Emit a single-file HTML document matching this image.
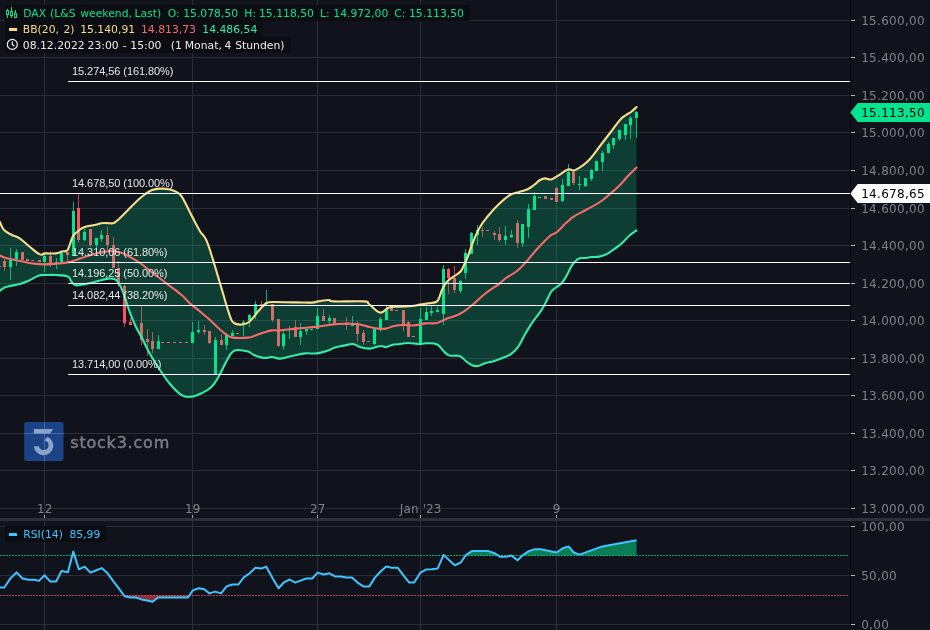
<!DOCTYPE html>
<html lang="de"><head><meta charset="utf-8"><title>DAX Chart</title>
<style>
html,body{margin:0;padding:0;background:#10131b;}
body{width:930px;height:630px;overflow:hidden;}
svg{display:block;}
text{font-family:"DejaVu Sans","Liberation Sans",sans-serif;}
.ax{font-size:12px;fill:#7d808a;}
.lg{font-size:10.8px;}
.fib{font-size:11px;fill:#e6e6e6;font-family:"Liberation Sans",sans-serif;}
</style></head><body>
<svg width="930" height="630" viewBox="0 0 930 630">
<rect width="930" height="630" fill="#10131b"/>
<defs>
<filter id="noLcd" filterUnits="userSpaceOnUse" x="0" y="0" width="930" height="630" color-interpolation-filters="sRGB"><feColorMatrix type="matrix" values="1 0 0 0 0 0 1 0 0 0 0 0 1 0 0 0 0 0 1 0"/></filter>
<clipPath id="main"><rect x="0" y="0" width="850" height="518"/></clipPath>
<clipPath id="up70"><rect x="0" y="520" width="850" height="35.5"/></clipPath>
<clipPath id="dn30"><rect x="0" y="595.3" width="850" height="40"/></clipPath>
</defs>
<g filter="url(#noLcd)">

<g stroke="#2a2e3a" stroke-width="1" shape-rendering="crispEdges">
<line x1="0" y1="508.5" x2="850" y2="508.5"/>
<line x1="0" y1="470.5" x2="850" y2="470.5"/>
<line x1="0" y1="433.5" x2="850" y2="433.5"/>
<line x1="0" y1="395.5" x2="850" y2="395.5"/>
<line x1="0" y1="358.5" x2="850" y2="358.5"/>
<line x1="0" y1="320.5" x2="850" y2="320.5"/>
<line x1="0" y1="283.5" x2="850" y2="283.5"/>
<line x1="0" y1="245.5" x2="850" y2="245.5"/>
<line x1="0" y1="208.5" x2="850" y2="208.5"/>
<line x1="0" y1="170.5" x2="850" y2="170.5"/>
<line x1="0" y1="132.5" x2="850" y2="132.5"/>
<line x1="0" y1="95.5" x2="850" y2="95.5"/>
<line x1="0" y1="57.5" x2="850" y2="57.5"/>
<line x1="0" y1="20.5" x2="850" y2="20.5"/>
<line x1="44.5" y1="0" x2="44.5" y2="630"/>
<line x1="192.5" y1="0" x2="192.5" y2="630"/>
<line x1="317.5" y1="0" x2="317.5" y2="630"/>
<line x1="420.5" y1="0" x2="420.5" y2="630"/>
<line x1="556.5" y1="0" x2="556.5" y2="630"/>
<line x1="0" y1="624.5" x2="850" y2="624.5"/>
<line x1="0" y1="575.5" x2="850" y2="575.5"/>
<line x1="0" y1="526.5" x2="850" y2="526.5"/>
</g>
<g clip-path="url(#main)" shape-rendering="crispEdges">
<rect x="4" y="259" width="1" height="12" fill="#ff5060" fill-opacity="0.75"/><rect x="3" y="261" width="3" height="6" fill="#ff5060"/>
<rect x="10" y="248" width="1" height="32" fill="#03e48f" fill-opacity="0.75"/><rect x="9" y="260" width="3" height="7" fill="#03e48f"/>
<rect x="16" y="249" width="1" height="17" fill="#03e48f" fill-opacity="0.75"/><rect x="15" y="252" width="3" height="7" fill="#03e48f"/>
<rect x="22" y="252" width="1" height="8" fill="#ff5060" fill-opacity="0.75"/><rect x="21" y="252" width="3" height="8" fill="#ff5060"/>
<rect x="27" y="259" width="1" height="2" fill="#ff5060" fill-opacity="0.75"/><rect x="26" y="259" width="3" height="2" fill="#ff5060"/>
<rect x="39" y="260" width="1" height="2" fill="#ff5060" fill-opacity="0.75"/><rect x="38" y="260" width="3" height="2" fill="#ff5060"/>
<rect x="44" y="254" width="1" height="18" fill="#03e48f" fill-opacity="0.75"/><rect x="43" y="256" width="3" height="6" fill="#03e48f"/>
<rect x="50" y="251" width="1" height="16" fill="#ff5060" fill-opacity="0.75"/><rect x="49" y="256" width="3" height="8" fill="#ff5060"/>
<rect x="56" y="258" width="1" height="11" fill="#03e48f" fill-opacity="0.75"/><rect x="55" y="262" width="3" height="1" fill="#03e48f"/>
<rect x="61" y="252" width="1" height="10" fill="#03e48f" fill-opacity="0.75"/><rect x="60" y="253" width="3" height="9" fill="#03e48f"/>
<rect x="67" y="252" width="1" height="11" fill="#ff5060" fill-opacity="0.75"/><rect x="66" y="252" width="3" height="3" fill="#ff5060"/>
<rect x="73" y="202" width="1" height="54" fill="#03e48f" fill-opacity="0.75"/><rect x="72" y="211" width="3" height="45" fill="#03e48f"/>
<rect x="78" y="194" width="1" height="49" fill="#ff5060" fill-opacity="0.75"/><rect x="77" y="208" width="3" height="32" fill="#ff5060"/>
<rect x="84" y="229" width="1" height="12" fill="#03e48f" fill-opacity="0.75"/><rect x="83" y="232" width="3" height="8" fill="#03e48f"/>
<rect x="90" y="229" width="1" height="18" fill="#ff5060" fill-opacity="0.75"/><rect x="89" y="229" width="3" height="16" fill="#ff5060"/>
<rect x="96" y="238" width="1" height="13" fill="#03e48f" fill-opacity="0.75"/><rect x="95" y="238" width="3" height="7" fill="#03e48f"/>
<rect x="101" y="230" width="1" height="12" fill="#03e48f" fill-opacity="0.75"/><rect x="100" y="235" width="3" height="4" fill="#03e48f"/>
<rect x="107" y="227" width="1" height="23" fill="#ff5060" fill-opacity="0.75"/><rect x="106" y="235" width="3" height="10" fill="#ff5060"/>
<rect x="113" y="237" width="1" height="31" fill="#ff5060" fill-opacity="0.75"/><rect x="112" y="245" width="3" height="23" fill="#ff5060"/>
<rect x="118" y="261" width="1" height="26" fill="#ff5060" fill-opacity="0.75"/><rect x="117" y="268" width="3" height="15" fill="#ff5060"/>
<rect x="124" y="284" width="1" height="43" fill="#ff5060" fill-opacity="0.75"/><rect x="123" y="286" width="3" height="37" fill="#ff5060"/>
<rect x="130" y="318" width="1" height="7" fill="#ff5060" fill-opacity="0.75"/><rect x="129" y="322" width="3" height="3" fill="#ff5060"/>
<rect x="141" y="306" width="1" height="39" fill="#ff5060" fill-opacity="0.75"/><rect x="140" y="323" width="3" height="17" fill="#ff5060"/>
<rect x="147" y="329" width="1" height="27" fill="#ff5060" fill-opacity="0.75"/><rect x="146" y="339" width="3" height="3" fill="#ff5060"/>
<rect x="152" y="332" width="1" height="21" fill="#ff5060" fill-opacity="0.75"/><rect x="151" y="341" width="3" height="8" fill="#ff5060"/>
<rect x="158" y="335" width="1" height="14" fill="#03e48f" fill-opacity="0.75"/><rect x="157" y="341" width="3" height="8" fill="#03e48f"/>
<rect x="192" y="322" width="1" height="21" fill="#03e48f" fill-opacity="0.75"/><rect x="191" y="332" width="3" height="11" fill="#03e48f"/>
<rect x="198" y="321" width="1" height="13" fill="#03e48f" fill-opacity="0.75"/><rect x="197" y="330" width="3" height="2" fill="#03e48f"/>
<rect x="204" y="325" width="1" height="10" fill="#ff5060" fill-opacity="0.75"/><rect x="203" y="330" width="3" height="2" fill="#ff5060"/>
<rect x="209" y="331" width="1" height="13" fill="#ff5060" fill-opacity="0.75"/><rect x="208" y="331" width="3" height="12" fill="#ff5060"/>
<rect x="215" y="337" width="1" height="37" fill="#03e48f" fill-opacity="0.75"/><rect x="214" y="340" width="3" height="34" fill="#03e48f"/>
<rect x="221" y="334" width="1" height="11" fill="#ff5060" fill-opacity="0.75"/><rect x="220" y="340" width="3" height="5" fill="#ff5060"/>
<rect x="226" y="335" width="1" height="15" fill="#03e48f" fill-opacity="0.75"/><rect x="225" y="335" width="3" height="10" fill="#03e48f"/>
<rect x="232" y="330" width="1" height="6" fill="#03e48f" fill-opacity="0.75"/><rect x="231" y="333" width="3" height="3" fill="#03e48f"/>
<rect x="243" y="320" width="1" height="16" fill="#03e48f" fill-opacity="0.75"/><rect x="242" y="322" width="3" height="3" fill="#03e48f"/>
<rect x="249" y="314" width="1" height="13" fill="#03e48f" fill-opacity="0.75"/><rect x="248" y="315" width="3" height="5" fill="#03e48f"/>
<rect x="255" y="301" width="1" height="18" fill="#03e48f" fill-opacity="0.75"/><rect x="254" y="304" width="3" height="10" fill="#03e48f"/>
<rect x="261" y="301" width="1" height="5" fill="#ff5060" fill-opacity="0.75"/><rect x="260" y="304" width="3" height="2" fill="#ff5060"/>
<rect x="266" y="290" width="1" height="13" fill="#03e48f" fill-opacity="0.75"/><rect x="265" y="302" width="3" height="1" fill="#03e48f"/>
<rect x="272" y="304" width="1" height="18" fill="#ff5060" fill-opacity="0.75"/><rect x="271" y="304" width="3" height="16" fill="#ff5060"/>
<rect x="278" y="319" width="1" height="28" fill="#ff5060" fill-opacity="0.75"/><rect x="277" y="319" width="3" height="27" fill="#ff5060"/>
<rect x="283" y="331" width="1" height="19" fill="#03e48f" fill-opacity="0.75"/><rect x="282" y="334" width="3" height="12" fill="#03e48f"/>
<rect x="289" y="326" width="1" height="13" fill="#03e48f" fill-opacity="0.75"/><rect x="288" y="329" width="3" height="1" fill="#03e48f"/>
<rect x="295" y="320" width="1" height="17" fill="#ff5060" fill-opacity="0.75"/><rect x="294" y="327" width="3" height="10" fill="#ff5060"/>
<rect x="300" y="323" width="1" height="22" fill="#03e48f" fill-opacity="0.75"/><rect x="299" y="331" width="3" height="6" fill="#03e48f"/>
<rect x="306" y="329" width="1" height="6" fill="#03e48f" fill-opacity="0.75"/><rect x="305" y="329" width="3" height="2" fill="#03e48f"/>
<rect x="317" y="308" width="1" height="21" fill="#03e48f" fill-opacity="0.75"/><rect x="316" y="316" width="3" height="13" fill="#03e48f"/>
<rect x="323" y="309" width="1" height="12" fill="#ff5060" fill-opacity="0.75"/><rect x="322" y="316" width="3" height="5" fill="#ff5060"/>
<rect x="329" y="315" width="1" height="11" fill="#03e48f" fill-opacity="0.75"/><rect x="328" y="318" width="3" height="3" fill="#03e48f"/>
<rect x="334" y="318" width="1" height="6" fill="#ff5060" fill-opacity="0.75"/><rect x="333" y="318" width="3" height="6" fill="#ff5060"/>
<rect x="346" y="317" width="1" height="13" fill="#ff5060" fill-opacity="0.75"/><rect x="345" y="324" width="3" height="1" fill="#ff5060"/>
<rect x="352" y="316" width="1" height="10" fill="#03e48f" fill-opacity="0.75"/><rect x="351" y="325" width="3" height="1" fill="#03e48f"/>
<rect x="357" y="321" width="1" height="21" fill="#ff5060" fill-opacity="0.75"/><rect x="356" y="325" width="3" height="9" fill="#ff5060"/>
<rect x="363" y="330" width="1" height="15" fill="#ff5060" fill-opacity="0.75"/><rect x="362" y="333" width="3" height="9" fill="#ff5060"/>
<rect x="374" y="329" width="1" height="16" fill="#03e48f" fill-opacity="0.75"/><rect x="373" y="329" width="3" height="15" fill="#03e48f"/>
<rect x="380" y="317" width="1" height="15" fill="#03e48f" fill-opacity="0.75"/><rect x="379" y="319" width="3" height="9" fill="#03e48f"/>
<rect x="386" y="306" width="1" height="14" fill="#03e48f" fill-opacity="0.75"/><rect x="385" y="309" width="3" height="11" fill="#03e48f"/>
<rect x="391" y="306" width="1" height="5" fill="#ff5060" fill-opacity="0.75"/><rect x="390" y="308" width="3" height="3" fill="#ff5060"/>
<rect x="403" y="310" width="1" height="21" fill="#ff5060" fill-opacity="0.75"/><rect x="402" y="310" width="3" height="14" fill="#ff5060"/>
<rect x="408" y="321" width="1" height="16" fill="#ff5060" fill-opacity="0.75"/><rect x="407" y="322" width="3" height="15" fill="#ff5060"/>
<rect x="420" y="308" width="1" height="37" fill="#03e48f" fill-opacity="0.75"/><rect x="419" y="319" width="3" height="26" fill="#03e48f"/>
<rect x="426" y="307" width="1" height="13" fill="#03e48f" fill-opacity="0.75"/><rect x="425" y="312" width="3" height="8" fill="#03e48f"/>
<rect x="431" y="306" width="1" height="10" fill="#03e48f" fill-opacity="0.75"/><rect x="430" y="311" width="3" height="2" fill="#03e48f"/>
<rect x="437" y="307" width="1" height="5" fill="#03e48f" fill-opacity="0.75"/><rect x="436" y="310" width="3" height="2" fill="#03e48f"/>
<rect x="443" y="265" width="1" height="60" fill="#03e48f" fill-opacity="0.75"/><rect x="442" y="269" width="3" height="45" fill="#03e48f"/>
<rect x="448" y="268" width="1" height="26" fill="#ff5060" fill-opacity="0.75"/><rect x="447" y="269" width="3" height="9" fill="#ff5060"/>
<rect x="454" y="266" width="1" height="27" fill="#ff5060" fill-opacity="0.75"/><rect x="453" y="278" width="3" height="12" fill="#ff5060"/>
<rect x="460" y="280" width="1" height="13" fill="#03e48f" fill-opacity="0.75"/><rect x="459" y="281" width="3" height="10" fill="#03e48f"/>
<rect x="465" y="249" width="1" height="30" fill="#03e48f" fill-opacity="0.75"/><rect x="464" y="253" width="3" height="20" fill="#03e48f"/>
<rect x="471" y="232" width="1" height="22" fill="#03e48f" fill-opacity="0.75"/><rect x="470" y="233" width="3" height="21" fill="#03e48f"/>
<rect x="477" y="225" width="1" height="20" fill="#03e48f" fill-opacity="0.75"/><rect x="476" y="230" width="3" height="5" fill="#03e48f"/>
<rect x="482" y="227" width="1" height="10" fill="#ff5060" fill-opacity="0.75"/><rect x="481" y="230" width="3" height="1" fill="#ff5060"/>
<rect x="494" y="231" width="1" height="9" fill="#ff5060" fill-opacity="0.75"/><rect x="493" y="233" width="3" height="2" fill="#ff5060"/>
<rect x="499" y="227" width="1" height="15" fill="#ff5060" fill-opacity="0.75"/><rect x="498" y="234" width="3" height="6" fill="#ff5060"/>
<rect x="505" y="226" width="1" height="19" fill="#03e48f" fill-opacity="0.75"/><rect x="504" y="236" width="3" height="4" fill="#03e48f"/>
<rect x="511" y="230" width="1" height="8" fill="#03e48f" fill-opacity="0.75"/><rect x="510" y="235" width="3" height="2" fill="#03e48f"/>
<rect x="517" y="220" width="1" height="28" fill="#ff5060" fill-opacity="0.75"/><rect x="516" y="223" width="3" height="20" fill="#ff5060"/>
<rect x="522" y="224" width="1" height="23" fill="#03e48f" fill-opacity="0.75"/><rect x="521" y="224" width="3" height="19" fill="#03e48f"/>
<rect x="528" y="204" width="1" height="34" fill="#03e48f" fill-opacity="0.75"/><rect x="527" y="209" width="3" height="18" fill="#03e48f"/>
<rect x="534" y="192" width="1" height="18" fill="#03e48f" fill-opacity="0.75"/><rect x="533" y="196" width="3" height="14" fill="#03e48f"/>
<rect x="545" y="196" width="1" height="3" fill="#ff5060" fill-opacity="0.75"/><rect x="544" y="196" width="3" height="3" fill="#ff5060"/>
<rect x="551" y="198" width="1" height="2" fill="#ff5060" fill-opacity="0.75"/><rect x="550" y="198" width="3" height="2" fill="#ff5060"/>
<rect x="556" y="187" width="1" height="15" fill="#ff5060" fill-opacity="0.75"/><rect x="555" y="188" width="3" height="14" fill="#ff5060"/>
<rect x="562" y="179" width="1" height="23" fill="#03e48f" fill-opacity="0.75"/><rect x="561" y="185" width="3" height="16" fill="#03e48f"/>
<rect x="568" y="164" width="1" height="22" fill="#03e48f" fill-opacity="0.75"/><rect x="567" y="172" width="3" height="14" fill="#03e48f"/>
<rect x="573" y="170" width="1" height="15" fill="#ff5060" fill-opacity="0.75"/><rect x="572" y="172" width="3" height="11" fill="#ff5060"/>
<rect x="579" y="176" width="1" height="14" fill="#03e48f" fill-opacity="0.75"/><rect x="578" y="184" width="3" height="1" fill="#03e48f"/>
<rect x="585" y="178" width="1" height="9" fill="#03e48f" fill-opacity="0.75"/><rect x="584" y="178" width="3" height="8" fill="#03e48f"/>
<rect x="591" y="169" width="1" height="12" fill="#03e48f" fill-opacity="0.75"/><rect x="590" y="170" width="3" height="9" fill="#03e48f"/>
<rect x="596" y="161" width="1" height="10" fill="#03e48f" fill-opacity="0.75"/><rect x="595" y="161" width="3" height="10" fill="#03e48f"/>
<rect x="602" y="151" width="1" height="20" fill="#03e48f" fill-opacity="0.75"/><rect x="601" y="153" width="3" height="9" fill="#03e48f"/>
<rect x="608" y="142" width="1" height="11" fill="#03e48f" fill-opacity="0.75"/><rect x="607" y="144" width="3" height="9" fill="#03e48f"/>
<rect x="613" y="138" width="1" height="11" fill="#03e48f" fill-opacity="0.75"/><rect x="612" y="138" width="3" height="7" fill="#03e48f"/>
<rect x="619" y="130" width="1" height="11" fill="#03e48f" fill-opacity="0.75"/><rect x="618" y="130" width="3" height="9" fill="#03e48f"/>
<rect x="625" y="124" width="1" height="16" fill="#03e48f" fill-opacity="0.75"/><rect x="624" y="124" width="3" height="11" fill="#03e48f"/>
<rect x="630" y="116" width="1" height="23" fill="#03e48f" fill-opacity="0.75"/><rect x="629" y="118" width="3" height="7" fill="#03e48f"/>
<rect x="636" y="111" width="1" height="27" fill="#03e48f" fill-opacity="0.75"/><rect x="635" y="112" width="3" height="6" fill="#03e48f"/>
<line x1="-2" y1="266.5" x2="2" y2="266.5" stroke="#ff5060" stroke-width="1" stroke-dasharray="3 3"/>
<line x1="31" y1="260.5" x2="36" y2="260.5" stroke="#ff5060" stroke-width="1" stroke-dasharray="3 3"/>
<line x1="161" y1="342.5" x2="190" y2="342.5" stroke="#ff5060" stroke-width="1" stroke-dasharray="3 3"/>
<line x1="236" y1="333.5" x2="241" y2="333.5" stroke="#ff5060" stroke-width="1" stroke-dasharray="3 3"/>
<line x1="310" y1="329.5" x2="315" y2="329.5" stroke="#03e48f" stroke-width="1" stroke-dasharray="3 3"/>
<line x1="367" y1="341.5" x2="372" y2="341.5" stroke="#ff5060" stroke-width="1" stroke-dasharray="3 3"/>
<line x1="395" y1="310.5" x2="400" y2="310.5" stroke="#ff5060" stroke-width="1" stroke-dasharray="3 3"/>
<line x1="412" y1="336.5" x2="417" y2="336.5" stroke="#ff5060" stroke-width="1" stroke-dasharray="3 3"/>
<line x1="486" y1="230.5" x2="491" y2="230.5" stroke="#ff5060" stroke-width="1" stroke-dasharray="3 3"/>
<line x1="538" y1="197.5" x2="543" y2="197.5" stroke="#03e48f" stroke-width="1" stroke-dasharray="3 3"/>
</g>
<g clip-path="url(#main)">
<path d="M-2.0 220.0C-1.6 220.5 -1.2 220.4 0.0 222.4C1.2 224.4 1.6 227.5 4.0 230.0C6.4 232.5 8.8 233.3 12.0 235.0C15.2 236.7 16.4 236.2 20.0 238.6C23.6 241.0 26.0 243.8 30.0 247.0C34.0 250.2 37.0 253.1 40.0 254.4C43.0 255.7 41.8 253.6 45.0 253.4C48.2 253.2 52.6 253.8 56.0 253.4C59.4 253.0 59.8 252.0 62.0 251.4C64.2 250.8 65.4 252.1 67.0 250.6C68.6 249.1 68.8 246.9 70.0 244.0C71.2 241.1 71.6 238.4 73.0 236.0C74.4 233.6 74.8 233.8 77.0 232.0C79.2 230.2 80.2 228.6 84.0 227.2C87.8 225.8 92.5 225.6 96.0 224.8C99.5 224.0 99.1 223.5 101.3 223.2C103.5 222.9 104.7 223.1 107.0 223.1C109.3 223.1 110.9 223.6 112.9 223.2C114.9 222.8 115.4 221.9 116.8 220.9C118.2 219.9 118.2 219.8 120.0 218.0C121.8 216.2 122.8 215.2 126.0 212.0C129.2 208.8 132.4 205.4 136.0 202.0C139.6 198.6 140.8 197.4 144.0 195.0C147.2 192.6 148.8 191.3 152.0 190.0C155.2 188.7 156.4 188.7 160.0 188.6C163.6 188.5 166.0 188.5 170.0 189.6C174.0 190.7 176.7 191.5 179.8 194.3C182.9 197.1 183.1 199.0 185.7 203.8C188.3 208.6 190.0 212.6 192.9 218.1C195.8 223.6 197.4 226.9 200.0 231.2C202.6 235.5 203.6 234.5 206.0 239.5C208.4 244.5 209.3 248.1 211.9 256.2C214.5 264.3 216.9 272.8 219.0 280.0C221.1 287.2 220.9 286.4 222.6 292.0C224.3 297.6 225.6 302.6 227.3 308.0C229.0 313.4 229.7 316.0 231.0 319.0C232.3 322.0 232.2 321.9 234.0 323.0C235.8 324.1 237.6 324.5 240.0 324.6C242.4 324.7 243.8 324.5 246.0 323.6C248.2 322.7 249.0 321.9 251.0 320.0C253.0 318.1 253.8 316.6 256.0 314.0C258.2 311.4 259.8 309.2 262.0 307.0C264.2 304.8 264.8 304.0 267.0 303.0C269.2 302.0 267.2 302.1 273.0 302.0C278.8 301.9 288.2 302.3 296.0 302.4C303.8 302.5 307.6 302.8 312.0 302.6C316.4 302.4 314.6 301.9 318.0 301.4C321.4 300.9 325.8 300.0 329.0 300.0C332.2 300.0 327.0 301.1 334.0 301.4C341.0 301.7 357.0 300.9 364.0 301.4C371.0 301.9 365.8 301.8 369.0 304.0C372.2 306.2 376.0 311.9 380.0 312.6C384.0 313.3 385.0 308.6 389.0 307.4C393.0 306.2 395.4 306.9 400.0 306.6C404.6 306.3 408.0 306.4 412.0 306.0C416.0 305.6 416.8 305.1 420.0 304.6C423.2 304.1 424.8 303.9 428.0 303.4C431.2 302.9 433.8 303.1 436.0 302.0C438.2 300.9 437.8 300.4 439.0 298.0C440.2 295.6 440.6 293.0 442.0 290.0C443.4 287.0 444.4 285.2 446.0 283.0C447.6 280.8 448.0 280.6 450.0 279.0C452.0 277.4 453.8 276.6 456.0 275.0C458.2 273.4 459.4 273.0 461.0 271.0C462.6 269.0 462.6 268.0 464.0 265.0C465.4 262.0 466.2 260.6 468.0 256.0C469.8 251.4 470.6 247.8 473.0 242.0C475.4 236.2 477.0 232.2 480.0 227.0C483.0 221.8 484.4 220.4 488.0 216.0C491.6 211.6 493.6 209.2 498.0 205.0C502.4 200.8 505.8 197.6 510.0 195.0C514.2 192.4 515.4 193.2 519.0 192.0C522.6 190.8 525.0 190.4 528.0 189.0C531.0 187.6 531.6 186.8 534.0 185.0C536.4 183.2 537.8 181.3 540.0 180.0C542.2 178.7 542.8 178.5 545.0 178.4C547.2 178.3 548.4 180.0 551.0 179.4C553.6 178.8 554.6 177.6 558.0 175.6C561.4 173.6 564.8 170.6 568.0 169.6C571.2 168.6 571.2 171.1 574.0 170.4C576.8 169.7 578.8 168.3 582.0 166.0C585.2 163.7 586.4 163.0 590.0 159.0C593.6 155.0 596.0 151.2 600.0 146.0C604.0 140.8 606.0 138.2 610.0 133.0C614.0 127.8 616.8 123.6 620.0 120.0C623.2 116.4 623.8 116.6 626.0 115.0C628.2 113.4 628.9 113.6 631.0 112.0C633.1 110.4 635.4 108.0 636.5 107.0L636.5 230.3C635.3 231.2 632.5 233.0 630.4 234.8C628.3 236.6 627.5 237.6 626.0 239.1C624.5 240.6 624.2 241.0 622.7 242.4C621.2 243.8 620.2 244.6 618.3 246.1C616.4 247.6 615.1 248.4 613.0 249.9C610.9 251.4 609.8 252.5 607.6 253.7C605.4 254.9 604.3 255.2 602.2 255.8C600.1 256.4 599.2 256.7 597.0 256.9C594.8 257.1 593.2 256.8 591.0 257.0C588.8 257.2 588.3 257.7 586.0 258.0C583.7 258.3 582.0 257.5 579.7 258.3C577.4 259.1 576.4 260.3 574.7 262.0C573.0 263.7 572.7 264.0 571.0 267.0C569.3 270.0 568.0 273.5 566.0 276.9C564.0 280.3 563.1 281.7 561.1 283.8C559.1 285.9 558.1 285.9 556.1 287.5C554.1 289.1 553.2 288.9 551.2 291.7C549.2 294.5 548.2 297.9 546.2 301.6C544.2 305.3 544.3 305.8 541.3 310.3C538.3 314.8 534.9 318.7 531.4 323.9C527.9 329.1 526.7 331.6 524.0 336.3C521.3 341.0 520.3 343.9 517.8 347.4C515.3 350.9 514.3 351.6 511.6 353.6C508.9 355.6 507.7 355.8 504.2 357.3C500.7 358.8 498.3 359.8 494.3 361.0C490.3 362.2 487.6 362.5 484.4 363.5C481.2 364.5 480.7 365.7 478.2 366.0C475.7 366.3 474.5 366.2 472.0 365.2C469.5 364.2 468.3 362.8 465.8 361.0C463.3 359.2 462.8 357.2 459.6 356.1C456.4 355.0 452.7 356.3 449.7 355.6C446.7 354.9 447.3 354.6 444.8 352.4C442.3 350.2 440.8 346.3 437.3 344.5C433.8 342.7 430.9 343.3 427.4 343.2C423.9 343.1 423.9 344.0 420.0 344.0C416.1 344.0 412.0 343.0 408.0 343.0C404.0 343.0 403.2 343.6 400.0 344.0C396.8 344.4 394.8 344.4 392.0 345.0C389.2 345.6 388.2 346.8 386.0 347.0C383.8 347.2 383.0 346.0 381.0 346.0C379.0 346.0 378.4 346.5 376.0 347.0C373.6 347.5 372.2 348.6 369.0 348.6C365.8 348.6 363.2 347.9 360.0 347.0C356.8 346.1 356.0 344.3 353.0 344.0C350.0 343.7 348.6 344.7 345.0 345.4C341.4 346.1 338.4 346.4 335.0 347.4C331.6 348.4 331.6 349.4 328.0 350.6C324.4 351.8 321.6 352.8 317.0 353.4C312.4 354.0 310.0 352.9 305.0 353.4C300.0 353.9 297.0 355.0 292.0 356.0C287.0 357.0 284.0 358.4 280.0 358.6C276.0 358.8 275.2 357.1 272.0 357.0C268.8 356.9 267.6 358.4 264.0 358.0C260.4 357.6 257.2 356.3 254.0 355.0C250.8 353.7 251.2 352.6 248.0 351.6C244.8 350.6 241.0 350.0 238.0 350.0C235.0 350.0 234.6 350.6 233.0 351.6C231.4 352.6 231.6 352.5 230.0 355.0C228.4 357.5 227.2 359.8 225.0 364.0C222.8 368.2 221.2 372.0 219.0 376.0C216.8 380.0 216.0 381.4 214.0 384.0C212.0 386.6 211.8 387.0 209.0 389.0C206.2 391.0 203.4 392.5 200.0 394.0C196.6 395.5 195.6 396.3 192.0 396.6C188.4 396.9 186.4 397.9 182.0 395.4C177.6 392.9 174.4 389.1 170.0 384.0C165.6 378.9 164.0 376.0 160.0 370.0C156.0 364.0 153.6 360.4 150.0 354.0C146.4 347.6 144.9 343.6 142.0 338.0C139.1 332.4 138.1 331.6 135.5 326.0C132.9 320.4 131.5 316.8 129.0 310.0C126.5 303.2 125.2 297.6 123.0 292.0C120.8 286.4 119.8 284.6 118.0 282.0C116.2 279.4 116.0 279.7 114.0 279.0C112.0 278.3 110.8 278.3 108.0 278.6C105.2 278.9 103.6 279.5 100.0 280.4C96.4 281.3 94.0 282.1 90.0 283.0C86.0 283.9 83.0 284.6 80.0 285.0C77.0 285.4 76.8 285.8 75.0 285.0C73.2 284.2 72.4 282.7 71.0 281.0C69.6 279.3 71.0 277.8 68.0 276.6C65.0 275.4 60.4 275.3 56.0 275.0C51.6 274.7 49.4 274.9 46.0 275.0C42.6 275.1 42.6 274.4 39.0 275.6C35.4 276.8 31.8 279.3 28.0 281.0C24.2 282.7 24.4 282.8 20.0 284.0C15.6 285.2 10.0 285.7 6.0 287.0C2.0 288.3 1.6 289.6 0.0 290.6C-1.6 291.6 -1.6 291.7 -2.0 292.0Z" fill="#03e48f" fill-opacity="0.2"/>
<path d="M-2.0 292.0C-1.6 291.7 -1.6 291.6 0.0 290.6C1.6 289.6 2.0 288.3 6.0 287.0C10.0 285.7 15.6 285.2 20.0 284.0C24.4 282.8 24.2 282.7 28.0 281.0C31.8 279.3 35.4 276.8 39.0 275.6C42.6 274.4 42.6 275.1 46.0 275.0C49.4 274.9 51.6 274.7 56.0 275.0C60.4 275.3 65.0 275.4 68.0 276.6C71.0 277.8 69.6 279.3 71.0 281.0C72.4 282.7 73.2 284.2 75.0 285.0C76.8 285.8 77.0 285.4 80.0 285.0C83.0 284.6 86.0 283.9 90.0 283.0C94.0 282.1 96.4 281.3 100.0 280.4C103.6 279.5 105.2 278.9 108.0 278.6C110.8 278.3 112.0 278.3 114.0 279.0C116.0 279.7 116.2 279.4 118.0 282.0C119.8 284.6 120.8 286.4 123.0 292.0C125.2 297.6 126.5 303.2 129.0 310.0C131.5 316.8 132.9 320.4 135.5 326.0C138.1 331.6 139.1 332.4 142.0 338.0C144.9 343.6 146.4 347.6 150.0 354.0C153.6 360.4 156.0 364.0 160.0 370.0C164.0 376.0 165.6 378.9 170.0 384.0C174.4 389.1 177.6 392.9 182.0 395.4C186.4 397.9 188.4 396.9 192.0 396.6C195.6 396.3 196.6 395.5 200.0 394.0C203.4 392.5 206.2 391.0 209.0 389.0C211.8 387.0 212.0 386.6 214.0 384.0C216.0 381.4 216.8 380.0 219.0 376.0C221.2 372.0 222.8 368.2 225.0 364.0C227.2 359.8 228.4 357.5 230.0 355.0C231.6 352.5 231.4 352.6 233.0 351.6C234.6 350.6 235.0 350.0 238.0 350.0C241.0 350.0 244.8 350.6 248.0 351.6C251.2 352.6 250.8 353.7 254.0 355.0C257.2 356.3 260.4 357.6 264.0 358.0C267.6 358.4 268.8 356.9 272.0 357.0C275.2 357.1 276.0 358.8 280.0 358.6C284.0 358.4 287.0 357.0 292.0 356.0C297.0 355.0 300.0 353.9 305.0 353.4C310.0 352.9 312.4 354.0 317.0 353.4C321.6 352.8 324.4 351.8 328.0 350.6C331.6 349.4 331.6 348.4 335.0 347.4C338.4 346.4 341.4 346.1 345.0 345.4C348.6 344.7 350.0 343.7 353.0 344.0C356.0 344.3 356.8 346.1 360.0 347.0C363.2 347.9 365.8 348.6 369.0 348.6C372.2 348.6 373.6 347.5 376.0 347.0C378.4 346.5 379.0 346.0 381.0 346.0C383.0 346.0 383.8 347.2 386.0 347.0C388.2 346.8 389.2 345.6 392.0 345.0C394.8 344.4 396.8 344.4 400.0 344.0C403.2 343.6 404.0 343.0 408.0 343.0C412.0 343.0 416.1 344.0 420.0 344.0C423.9 344.0 423.9 343.1 427.4 343.2C430.9 343.3 433.8 342.7 437.3 344.5C440.8 346.3 442.3 350.2 444.8 352.4C447.3 354.6 446.7 354.9 449.7 355.6C452.7 356.3 456.4 355.0 459.6 356.1C462.8 357.2 463.3 359.2 465.8 361.0C468.3 362.8 469.5 364.2 472.0 365.2C474.5 366.2 475.7 366.3 478.2 366.0C480.7 365.7 481.2 364.5 484.4 363.5C487.6 362.5 490.3 362.2 494.3 361.0C498.3 359.8 500.7 358.8 504.2 357.3C507.7 355.8 508.9 355.6 511.6 353.6C514.3 351.6 515.3 350.9 517.8 347.4C520.3 343.9 521.3 341.0 524.0 336.3C526.7 331.6 527.9 329.1 531.4 323.9C534.9 318.7 538.3 314.8 541.3 310.3C544.3 305.8 544.2 305.3 546.2 301.6C548.2 297.9 549.2 294.5 551.2 291.7C553.2 288.9 554.1 289.1 556.1 287.5C558.1 285.9 559.1 285.9 561.1 283.8C563.1 281.7 564.0 280.3 566.0 276.9C568.0 273.5 569.3 270.0 571.0 267.0C572.7 264.0 573.0 263.7 574.7 262.0C576.4 260.3 577.4 259.1 579.7 258.3C582.0 257.5 583.7 258.3 586.0 258.0C588.3 257.7 588.8 257.2 591.0 257.0C593.2 256.8 594.8 257.1 597.0 256.9C599.2 256.7 600.1 256.4 602.2 255.8C604.3 255.2 605.4 254.9 607.6 253.7C609.8 252.5 610.9 251.4 613.0 249.9C615.1 248.4 616.4 247.6 618.3 246.1C620.2 244.6 621.2 243.8 622.7 242.4C624.2 241.0 624.5 240.6 626.0 239.1C627.5 237.6 628.3 236.6 630.4 234.8C632.5 233.0 635.3 231.2 636.5 230.3" fill="none" stroke="#33eca8" stroke-width="2.1" stroke-linejoin="round" stroke-linecap="round"/>
<path d="M-2.0 255.0C-1.6 255.1 -1.6 255.0 0.0 255.6C1.6 256.2 2.0 256.9 6.0 258.0C10.0 259.1 14.4 259.9 20.0 261.0C25.6 262.1 29.2 262.9 34.0 263.6C38.8 264.3 39.6 264.4 44.0 264.4C48.4 264.4 51.2 264.0 56.0 263.6C60.8 263.2 63.2 263.4 68.0 262.4C72.8 261.4 74.8 260.3 80.0 258.6C85.2 256.9 88.8 255.4 94.0 254.0C99.2 252.6 102.0 252.2 106.0 251.6C110.0 251.0 110.8 250.7 114.0 251.0C117.2 251.3 118.8 251.8 122.0 253.0C125.2 254.2 126.4 255.0 130.0 257.0C133.6 259.0 135.6 259.9 140.0 263.0C144.4 266.1 146.8 268.5 152.0 272.5C157.2 276.5 160.2 278.6 166.0 283.0C171.8 287.4 176.2 290.4 181.0 294.5C185.8 298.6 186.2 300.1 190.0 303.5C193.8 306.9 196.0 308.2 200.0 311.5C204.0 314.8 206.0 316.4 210.0 320.0C214.0 323.6 216.6 326.5 220.0 329.5C223.4 332.5 224.4 333.4 227.0 335.0C229.6 336.6 228.8 337.1 233.0 337.6C237.2 338.1 243.8 337.9 248.0 337.6C252.2 337.3 250.8 337.0 254.0 336.0C257.2 335.0 260.4 333.5 264.0 332.4C267.6 331.3 268.8 330.8 272.0 330.4C275.2 330.0 275.2 330.8 280.0 330.4C284.8 330.0 288.4 329.4 296.0 328.6C303.6 327.8 309.6 327.5 318.0 326.6C326.4 325.7 330.4 324.5 338.0 324.0C345.6 323.5 350.0 323.5 356.0 324.0C362.0 324.5 363.6 325.7 368.0 326.6C372.4 327.5 374.4 328.2 378.0 328.6C381.6 329.0 382.8 329.1 386.0 328.6C389.2 328.1 390.4 326.7 394.0 326.0C397.6 325.3 400.0 325.1 404.0 325.0C408.0 324.9 409.6 325.7 414.0 325.4C418.4 325.1 421.4 323.9 426.0 323.4C430.6 322.9 432.8 324.0 437.0 323.0C441.2 322.0 442.5 320.3 447.0 318.5C451.5 316.7 454.6 316.6 459.6 314.0C464.6 311.4 467.0 309.3 472.0 305.3C477.0 301.3 479.0 298.5 484.4 294.2C489.8 289.9 494.9 287.0 499.2 283.8C503.5 280.6 502.4 280.6 506.0 278.0C509.6 275.4 513.0 274.2 517.0 271.0C521.0 267.8 521.8 266.6 526.0 262.0C530.2 257.4 533.2 253.2 538.0 248.0C542.8 242.8 546.2 239.2 550.0 236.0C553.8 232.8 553.8 234.6 557.0 232.0C560.2 229.4 562.6 226.1 566.0 223.0C569.4 219.9 570.0 219.0 574.0 216.4C578.0 213.8 580.8 212.9 586.0 210.0C591.2 207.1 595.2 205.2 600.0 202.0C604.8 198.8 606.0 197.4 610.0 194.0C614.0 190.6 616.4 188.6 620.0 185.0C623.6 181.4 624.7 179.5 628.0 176.0C631.3 172.5 634.8 169.3 636.5 167.6" fill="none" stroke="#f86a6c" stroke-width="2.1" stroke-linejoin="round" stroke-linecap="round"/>
<path d="M-2.0 220.0C-1.6 220.5 -1.2 220.4 0.0 222.4C1.2 224.4 1.6 227.5 4.0 230.0C6.4 232.5 8.8 233.3 12.0 235.0C15.2 236.7 16.4 236.2 20.0 238.6C23.6 241.0 26.0 243.8 30.0 247.0C34.0 250.2 37.0 253.1 40.0 254.4C43.0 255.7 41.8 253.6 45.0 253.4C48.2 253.2 52.6 253.8 56.0 253.4C59.4 253.0 59.8 252.0 62.0 251.4C64.2 250.8 65.4 252.1 67.0 250.6C68.6 249.1 68.8 246.9 70.0 244.0C71.2 241.1 71.6 238.4 73.0 236.0C74.4 233.6 74.8 233.8 77.0 232.0C79.2 230.2 80.2 228.6 84.0 227.2C87.8 225.8 92.5 225.6 96.0 224.8C99.5 224.0 99.1 223.5 101.3 223.2C103.5 222.9 104.7 223.1 107.0 223.1C109.3 223.1 110.9 223.6 112.9 223.2C114.9 222.8 115.4 221.9 116.8 220.9C118.2 219.9 118.2 219.8 120.0 218.0C121.8 216.2 122.8 215.2 126.0 212.0C129.2 208.8 132.4 205.4 136.0 202.0C139.6 198.6 140.8 197.4 144.0 195.0C147.2 192.6 148.8 191.3 152.0 190.0C155.2 188.7 156.4 188.7 160.0 188.6C163.6 188.5 166.0 188.5 170.0 189.6C174.0 190.7 176.7 191.5 179.8 194.3C182.9 197.1 183.1 199.0 185.7 203.8C188.3 208.6 190.0 212.6 192.9 218.1C195.8 223.6 197.4 226.9 200.0 231.2C202.6 235.5 203.6 234.5 206.0 239.5C208.4 244.5 209.3 248.1 211.9 256.2C214.5 264.3 216.9 272.8 219.0 280.0C221.1 287.2 220.9 286.4 222.6 292.0C224.3 297.6 225.6 302.6 227.3 308.0C229.0 313.4 229.7 316.0 231.0 319.0C232.3 322.0 232.2 321.9 234.0 323.0C235.8 324.1 237.6 324.5 240.0 324.6C242.4 324.7 243.8 324.5 246.0 323.6C248.2 322.7 249.0 321.9 251.0 320.0C253.0 318.1 253.8 316.6 256.0 314.0C258.2 311.4 259.8 309.2 262.0 307.0C264.2 304.8 264.8 304.0 267.0 303.0C269.2 302.0 267.2 302.1 273.0 302.0C278.8 301.9 288.2 302.3 296.0 302.4C303.8 302.5 307.6 302.8 312.0 302.6C316.4 302.4 314.6 301.9 318.0 301.4C321.4 300.9 325.8 300.0 329.0 300.0C332.2 300.0 327.0 301.1 334.0 301.4C341.0 301.7 357.0 300.9 364.0 301.4C371.0 301.9 365.8 301.8 369.0 304.0C372.2 306.2 376.0 311.9 380.0 312.6C384.0 313.3 385.0 308.6 389.0 307.4C393.0 306.2 395.4 306.9 400.0 306.6C404.6 306.3 408.0 306.4 412.0 306.0C416.0 305.6 416.8 305.1 420.0 304.6C423.2 304.1 424.8 303.9 428.0 303.4C431.2 302.9 433.8 303.1 436.0 302.0C438.2 300.9 437.8 300.4 439.0 298.0C440.2 295.6 440.6 293.0 442.0 290.0C443.4 287.0 444.4 285.2 446.0 283.0C447.6 280.8 448.0 280.6 450.0 279.0C452.0 277.4 453.8 276.6 456.0 275.0C458.2 273.4 459.4 273.0 461.0 271.0C462.6 269.0 462.6 268.0 464.0 265.0C465.4 262.0 466.2 260.6 468.0 256.0C469.8 251.4 470.6 247.8 473.0 242.0C475.4 236.2 477.0 232.2 480.0 227.0C483.0 221.8 484.4 220.4 488.0 216.0C491.6 211.6 493.6 209.2 498.0 205.0C502.4 200.8 505.8 197.6 510.0 195.0C514.2 192.4 515.4 193.2 519.0 192.0C522.6 190.8 525.0 190.4 528.0 189.0C531.0 187.6 531.6 186.8 534.0 185.0C536.4 183.2 537.8 181.3 540.0 180.0C542.2 178.7 542.8 178.5 545.0 178.4C547.2 178.3 548.4 180.0 551.0 179.4C553.6 178.8 554.6 177.6 558.0 175.6C561.4 173.6 564.8 170.6 568.0 169.6C571.2 168.6 571.2 171.1 574.0 170.4C576.8 169.7 578.8 168.3 582.0 166.0C585.2 163.7 586.4 163.0 590.0 159.0C593.6 155.0 596.0 151.2 600.0 146.0C604.0 140.8 606.0 138.2 610.0 133.0C614.0 127.8 616.8 123.6 620.0 120.0C623.2 116.4 623.8 116.6 626.0 115.0C628.2 113.4 628.9 113.6 631.0 112.0C633.1 110.4 635.4 108.0 636.5 107.0" fill="none" stroke="#f8dc8c" stroke-width="2.1" stroke-linejoin="round" stroke-linecap="round"/>
</g>
<g stroke="#ffffff" stroke-width="1" shape-rendering="crispEdges">
<line x1="68" y1="81.5" x2="850" y2="81.5"/>
<line x1="68" y1="193.5" x2="850" y2="193.5"/>
<line x1="68" y1="262.5" x2="850" y2="262.5"/>
<line x1="68" y1="283.5" x2="850" y2="283.5"/>
<line x1="68" y1="305.5" x2="850" y2="305.5"/>
<line x1="68" y1="374.5" x2="850" y2="374.5"/>
<line x1="0" y1="193.5" x2="850" y2="193.5"/>
</g>
<text class="fib" x="72" y="75.2" letter-spacing="-0.07">15.274,56 (161.80%)</text>
<text class="fib" x="72" y="187.2" letter-spacing="-0.07">14.678,50 (100.00%)</text>
<text class="fib" x="72" y="256.2" letter-spacing="-0.07">14.310,06 (61.80%)</text>
<text class="fib" x="72" y="277.2" letter-spacing="-0.07">14.196,25 (50.00%)</text>
<text class="fib" x="72" y="299.2" letter-spacing="-0.07">14.082,44 (38.20%)</text>
<text class="fib" x="72" y="368.2" letter-spacing="-0.07">13.714,00 (0.00%)</text>
<g>
<rect x="24.2" y="421.9" width="39.3" height="39" rx="2.2" fill="#1b4486"/>
<path d="M33.9 428.9H53.1L50 433.8H33.9Z M47.58 436.71A9.7 9.7 0 1 1 33.9 446.3L39.05 446.3A4.8 4.8 0 1 0 44.17 440.46Z" fill="#8ea3ca"/>
<g stroke="#6f8ec4" stroke-opacity="0.5" stroke-width="1" shape-rendering="crispEdges"><line x1="44.5" y1="422" x2="44.5" y2="461"/><line x1="24.2" y1="433.5" x2="63.5" y2="433.5"/></g>
<text x="70.3" y="448.3" font-size="16" letter-spacing="0.78" fill="#7a7d86" stroke="#7a7d86" stroke-width="0.45">stock3.com</text>
</g>
<text class="ax" x="44.7" y="513" text-anchor="middle" letter-spacing="0.15">12</text>
<text class="ax" x="192.7" y="513" text-anchor="middle" letter-spacing="0.15">19</text>
<text class="ax" x="317.7" y="513" text-anchor="middle" letter-spacing="0.15">27</text>
<text class="ax" x="420.7" y="513" text-anchor="middle" letter-spacing="0.15">Jan '23</text>
<text class="ax" x="556.7" y="513" text-anchor="middle" letter-spacing="0.15">9</text>
<rect x="44" y="515" width="1" height="3" fill="#a4a7af"/>
<rect x="192" y="515" width="1" height="3" fill="#a4a7af"/>
<rect x="317" y="515" width="1" height="3" fill="#a4a7af"/>
<rect x="420" y="515" width="1" height="3" fill="#a4a7af"/>
<rect x="556" y="515" width="1" height="3" fill="#a4a7af"/>
<rect x="0" y="518" width="930" height="3" fill="#2c303a"/>
<polygon points="-2.0,587.5 4.3,587.5 10.6,578.1 16.6,572.4 22.5,578.5 28.4,579.7 34.3,579.7 39.0,580.9 44.5,575.2 50.4,581.6 56.1,581.6 61.5,571.0 67.9,572.2 73.3,551.6 78.8,569.3 84.7,566.7 90.4,572.6 95.8,570.5 101.7,568.1 107.6,573.3 113.6,581.6 119.0,588.7 124.7,596.3 130.1,597.5 136.0,597.5 141.5,599.4 147.1,600.5 152.6,601.7 158.0,597.5 164.4,597.5 188.1,597.5 192.8,590.4 198.7,588.2 204.2,589.2 209.4,593.4 215.2,591.6 221.1,593.4 226.6,586.4 232.5,584.5 238.4,584.5 243.8,577.4 249.7,573.3 255.4,567.7 260.9,568.6 266.3,566.7 272.2,577.6 278.6,588.2 284.0,582.3 289.7,579.5 295.2,582.6 301.1,580.4 306.5,578.5 312.2,578.5 317.6,572.6 323.6,574.5 329.5,573.3 334.9,576.4 340.6,576.4 346.5,577.4 351.9,577.4 357.9,582.8 363.8,586.6 369.2,586.6 374.9,577.6 380.3,571.7 386.2,566.5 391.7,567.7 397.6,567.7 403.3,575.2 409.2,582.6 414.2,582.6 420.1,572.9 425.9,569.6 431.8,569.3 437.7,568.4 443.7,554.9 448.9,559.9 454.8,565.3 460.7,562.5 466.1,554.9 472.0,551.1 488.6,551.1 494.5,553.2 500.4,556.8 505.6,556.8 511.6,555.6 517.5,560.3 522.9,555.1 528.8,551.1 534.7,549.2 540.7,549.2 556.5,552.5 562.7,548.3 568.6,546.4 573.8,552.5 579.7,554.6 602.2,546.4 636.5,540.3 636.5,556.0 -2.0,556.0" fill="#0a7d55" clip-path="url(#up70)"/>
<polygon points="-2.0,587.5 4.3,587.5 10.6,578.1 16.6,572.4 22.5,578.5 28.4,579.7 34.3,579.7 39.0,580.9 44.5,575.2 50.4,581.6 56.1,581.6 61.5,571.0 67.9,572.2 73.3,551.6 78.8,569.3 84.7,566.7 90.4,572.6 95.8,570.5 101.7,568.1 107.6,573.3 113.6,581.6 119.0,588.7 124.7,596.3 130.1,597.5 136.0,597.5 141.5,599.4 147.1,600.5 152.6,601.7 158.0,597.5 164.4,597.5 188.1,597.5 192.8,590.4 198.7,588.2 204.2,589.2 209.4,593.4 215.2,591.6 221.1,593.4 226.6,586.4 232.5,584.5 238.4,584.5 243.8,577.4 249.7,573.3 255.4,567.7 260.9,568.6 266.3,566.7 272.2,577.6 278.6,588.2 284.0,582.3 289.7,579.5 295.2,582.6 301.1,580.4 306.5,578.5 312.2,578.5 317.6,572.6 323.6,574.5 329.5,573.3 334.9,576.4 340.6,576.4 346.5,577.4 351.9,577.4 357.9,582.8 363.8,586.6 369.2,586.6 374.9,577.6 380.3,571.7 386.2,566.5 391.7,567.7 397.6,567.7 403.3,575.2 409.2,582.6 414.2,582.6 420.1,572.9 425.9,569.6 431.8,569.3 437.7,568.4 443.7,554.9 448.9,559.9 454.8,565.3 460.7,562.5 466.1,554.9 472.0,551.1 488.6,551.1 494.5,553.2 500.4,556.8 505.6,556.8 511.6,555.6 517.5,560.3 522.9,555.1 528.8,551.1 534.7,549.2 540.7,549.2 556.5,552.5 562.7,548.3 568.6,546.4 573.8,552.5 579.7,554.6 602.2,546.4 636.5,540.3 636.5,595.0 -2.0,595.0" fill="#8e2d3b" clip-path="url(#dn30)"/>
<g shape-rendering="crispEdges"><line x1="0" y1="555.5" x2="848" y2="555.5" stroke="#03e48f" stroke-opacity="0.7" stroke-width="1" stroke-dasharray="2 1"/><line x1="0" y1="595.5" x2="848" y2="595.5" stroke="#ff5060" stroke-opacity="0.72" stroke-width="1" stroke-dasharray="2 1"/></g>
<polyline points="-2.0,587.5 4.3,587.5 10.6,578.1 16.6,572.4 22.5,578.5 28.4,579.7 34.3,579.7 39.0,580.9 44.5,575.2 50.4,581.6 56.1,581.6 61.5,571.0 67.9,572.2 73.3,551.6 78.8,569.3 84.7,566.7 90.4,572.6 95.8,570.5 101.7,568.1 107.6,573.3 113.6,581.6 119.0,588.7 124.7,596.3 130.1,597.5 136.0,597.5 141.5,599.4 147.1,600.5 152.6,601.7 158.0,597.5 164.4,597.5 188.1,597.5 192.8,590.4 198.7,588.2 204.2,589.2 209.4,593.4 215.2,591.6 221.1,593.4 226.6,586.4 232.5,584.5 238.4,584.5 243.8,577.4 249.7,573.3 255.4,567.7 260.9,568.6 266.3,566.7 272.2,577.6 278.6,588.2 284.0,582.3 289.7,579.5 295.2,582.6 301.1,580.4 306.5,578.5 312.2,578.5 317.6,572.6 323.6,574.5 329.5,573.3 334.9,576.4 340.6,576.4 346.5,577.4 351.9,577.4 357.9,582.8 363.8,586.6 369.2,586.6 374.9,577.6 380.3,571.7 386.2,566.5 391.7,567.7 397.6,567.7 403.3,575.2 409.2,582.6 414.2,582.6 420.1,572.9 425.9,569.6 431.8,569.3 437.7,568.4 443.7,554.9 448.9,559.9 454.8,565.3 460.7,562.5 466.1,554.9 472.0,551.1 488.6,551.1 494.5,553.2 500.4,556.8 505.6,556.8 511.6,555.6 517.5,560.3 522.9,555.1 528.8,551.1 534.7,549.2 540.7,549.2 556.5,552.5 562.7,548.3 568.6,546.4 573.8,552.5 579.7,554.6 602.2,546.4 636.5,540.3" fill="none" stroke="#40c4ff" stroke-width="2" stroke-linejoin="round" stroke-linecap="butt"/>
<rect x="850" y="0" width="80" height="630" fill="#10131b"/>
<line x1="850.5" y1="0" x2="850.5" y2="630" stroke="#090a0f" stroke-width="1" shape-rendering="crispEdges"/>
<rect x="850" y="518" width="80" height="3" fill="#2c303a"/>
<g stroke="#b9bbc2" stroke-width="1" shape-rendering="crispEdges">
<line x1="851" y1="508.5" x2="855" y2="508.5"/>
<line x1="851" y1="470.5" x2="855" y2="470.5"/>
<line x1="851" y1="433.5" x2="855" y2="433.5"/>
<line x1="851" y1="395.5" x2="855" y2="395.5"/>
<line x1="851" y1="358.5" x2="855" y2="358.5"/>
<line x1="851" y1="320.5" x2="855" y2="320.5"/>
<line x1="851" y1="283.5" x2="855" y2="283.5"/>
<line x1="851" y1="245.5" x2="855" y2="245.5"/>
<line x1="851" y1="208.5" x2="855" y2="208.5"/>
<line x1="851" y1="170.5" x2="855" y2="170.5"/>
<line x1="851" y1="132.5" x2="855" y2="132.5"/>
<line x1="851" y1="95.5" x2="855" y2="95.5"/>
<line x1="851" y1="57.5" x2="855" y2="57.5"/>
<line x1="851" y1="20.5" x2="855" y2="20.5"/>
<line x1="851" y1="624.5" x2="855" y2="624.5"/>
<line x1="851" y1="575.5" x2="855" y2="575.5"/>
<line x1="851" y1="526.5" x2="855" y2="526.5"/>
</g>
<text class="ax" x="861.2" y="512.9" letter-spacing="0.3">13.000,00</text>
<text class="ax" x="861.2" y="474.9" letter-spacing="0.3">13.200,00</text>
<text class="ax" x="861.2" y="437.9" letter-spacing="0.3">13.400,00</text>
<text class="ax" x="861.2" y="399.9" letter-spacing="0.3">13.600,00</text>
<text class="ax" x="861.2" y="362.9" letter-spacing="0.3">13.800,00</text>
<text class="ax" x="861.2" y="324.9" letter-spacing="0.3">14.000,00</text>
<text class="ax" x="861.2" y="287.9" letter-spacing="0.3">14.200,00</text>
<text class="ax" x="861.2" y="249.9" letter-spacing="0.3">14.400,00</text>
<text class="ax" x="861.2" y="212.9" letter-spacing="0.3">14.600,00</text>
<text class="ax" x="861.2" y="174.9" letter-spacing="0.3">14.800,00</text>
<text class="ax" x="861.2" y="136.9" letter-spacing="0.3">15.000,00</text>
<text class="ax" x="861.2" y="99.9" letter-spacing="0.3">15.200,00</text>
<text class="ax" x="861.2" y="61.9" letter-spacing="0.3">15.400,00</text>
<text class="ax" x="861.2" y="24.9" letter-spacing="0.3">15.600,00</text>
<text class="ax" x="861.2" y="628.9" letter-spacing="0.3">0,00</text>
<text class="ax" x="861.2" y="579.9" letter-spacing="0.3">50,00</text>
<text class="ax" x="861.2" y="530.9" letter-spacing="0.3">100,00</text>
<path d="M850.3 193.4 L857.7 184 H930 V203 H857.7 Z" fill="#ffffff"/><text x="861.2" y="197.9" font-size="12" fill="#000" letter-spacing="0.3">14.678,65</text>
<path d="M850.3 112.6 L857.7 103.1 H930 V122.1 H857.7 Z" fill="#03e48f"/><text x="861.2" y="117" font-size="12" fill="#000" letter-spacing="0.3">15.113,50</text>
<rect x="5" y="5" width="465" height="16" fill="#0b0d13"/><rect x="5" y="21" width="258" height="16" fill="#0b0d13"/><rect x="5" y="37" width="286" height="16" fill="#0b0d13"/>
<g fill="none" stroke="#03e48f" stroke-width="1" shape-rendering="crispEdges"><path d="M7.5 9v9M11.5 7v11M15.5 9.5v8.5"/><rect x="6.5" y="10.5" width="2" height="3.5" fill="#0b0d13"/><rect x="10.5" y="11" width="2" height="4.5" fill="#0b0d13"/><rect x="14.5" y="13.5" width="2" height="3.5" fill="#0b0d13"/></g>
<rect x="9" y="28" width="8.1" height="3" rx="0.5" fill="#f8dc8c"/>
<g fill="none" stroke="#f0f0f0" stroke-width="1.2"><circle cx="12.3" cy="44.4" r="5"/><path d="M12.3 41.3V44.5L14.4 46.2"/></g>
<text class="lg" y="17.1"><tspan x="23.2" fill="#03e48f">DAX</tspan><tspan x="50.0" fill="#03e48f">(L&amp;S</tspan><tspan x="80.2" fill="#03e48f">weekend,</tspan><tspan x="134.4" fill="#03e48f">Last)</tspan><tspan x="167.7" fill="#03e48f">O:</tspan><tspan x="183.2" fill="#03e48f">15.078,50</tspan><tspan x="244.3" fill="#03e48f">H:</tspan><tspan x="259.0" fill="#03e48f">15.118,50</tspan><tspan x="319.9" fill="#03e48f">L:</tspan><tspan x="333.3" fill="#03e48f">14.972,00</tspan><tspan x="394.2" fill="#03e48f">C:</tspan><tspan x="409.0" fill="#03e48f">15.113,50</tspan></text>
<text class="lg" y="32.8"><tspan x="22.8" fill="#f8dc8c">BB(20,</tspan><tspan x="63.5" fill="#f8dc8c">2)</tspan><tspan x="80.2" fill="#f8dc8c">15.140,91</tspan><tspan x="141.0" fill="#f86a6c">14.813,73</tspan><tspan x="202.3" fill="#33eca8">14.486,54</tspan></text>
<text class="lg" y="48.5"><tspan x="22.8" fill="#ececec">08.12.2022</tspan><tspan x="87.6" fill="#ececec">23:00</tspan><tspan x="122.8" fill="#ececec">-</tspan><tspan x="130.3" fill="#ececec">15:00</tspan><tspan x="170.8" fill="#ececec">(1</tspan><tspan x="184.8" fill="#ececec">Monat,</tspan><tspan x="224.6" fill="#ececec">4</tspan><tspan x="235.2" fill="#ececec">Stunden)</tspan></text>
<rect x="5" y="526" width="101" height="16" fill="#0b0d13"/><rect x="8.8" y="533" width="8.2" height="3" rx="0.5" fill="#40c4ff"/>
<text class="lg" y="538.3"><tspan x="23.2" fill="#40c4ff">RSI(14)</tspan><tspan x="69.4" fill="#40c4ff">85,99</tspan></text>
</g></svg></body></html>
